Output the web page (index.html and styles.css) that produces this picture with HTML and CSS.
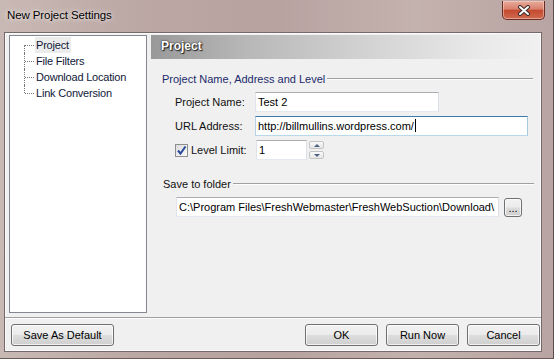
FILE: index.html
```html
<!DOCTYPE html>
<html lang="en">
  <head>
    <meta charset="UTF-8" />
    <title>New Project Settings</title>
    <link rel="stylesheet" href="styles.css">
  </head>
  <body>
    <div class="window">
      <div class="titlebar">
        <span class="titlebar-text">New Project Settings</span>
        <div class="titlebar-close">
          <svg width="14" height="11" viewBox="0 0 14 11">
            <path d="M3 2 L11 9 M11 2 L3 9" stroke="#3b2a28" stroke-width="4" stroke-linecap="round" />
            <path d="M3 2 L11 9 M11 2 L3 9" stroke="#ffffff" stroke-width="2" stroke-linecap="round" />
          </svg>
        </div>
      </div>

      <div class="client">
        <div class="main">
          <ul class="tree">
            <li class="tree-item"><span class="tree-label tree-selected">Project</span></li>
            <li class="tree-item"><span class="tree-label">File Filters</span></li>
            <li class="tree-item"><span class="tree-label">Download Location</span></li>
            <li class="tree-item"><span class="tree-label">Link Conversion</span></li>
          </ul>

          <div class="panel">
            <div class="panel-head">Project</div>

            <div class="group-title group-first">
              <span>Project Name, Address and Level</span>
              <span class="group-line"></span>
            </div>

            <div class="field-row row-first">
              <span class="field-label">Project Name:</span>
              <div class="textbox box-name">Test 2</div>
            </div>
            <div class="field-row">
              <span class="field-label">URL Address:</span>
              <div class="textbox textbox-focus box-url">http://billmullins.wordpress.com/<span class="caret"></span></div>
            </div>
            <div class="field-row">
              <span class="field-label field-check">
                <span class="checkbox">
                  <svg width="11" height="11" viewBox="0 0 11 11">
                    <path d="M2 5.5 L4.5 8.5 L9.5 1.5" stroke="#2b4a9a" stroke-width="2" fill="none" />
                  </svg>
                </span>
                Level Limit:
              </span>
              <div class="textbox box-level">1</div>
              <div class="spin">
                <div class="spin-btn"><span class="arrow-up"></span></div>
                <div class="spin-btn"><span class="arrow-down"></span></div>
              </div>
            </div>

            <div class="group-title group-second">
              <span>Save to folder</span>
              <span class="group-line"></span>
            </div>

            <div class="field-row folder-row">
              <div class="textbox box-folder">C:\Program Files\FreshWebmaster\FreshWebSuction\Download\</div>
              <div class="button button-browse">...</div>
            </div>
          </div>
        </div>

        <div class="separator"></div>

        <div class="buttons">
          <div class="button button-default">Save As Default</div>
          <div class="buttons-right">
            <div class="button button-action">OK</div>
            <div class="button button-action">Run Now</div>
            <div class="button button-action">Cancel</div>
          </div>
        </div>
      </div>
    </div>
  </body>
</html>
```

FILE: styles.css
```css
* {
  margin: 0;
  padding: 0;
  box-sizing: border-box;
}

body {
  width: 554px;
  height: 359px;
  overflow: hidden;
  font-family: "Liberation Sans", Arial, sans-serif;
  font-size: 11px;
  color: #111;
}

.window {
  height: 359px;
  display: flex;
  flex-direction: column;
  padding: 0 11px 6px 4px;
  border-right: 1px solid #5e4e4c;
  border-bottom: 1px solid #6a5a58;
  background: linear-gradient(90deg, #c9b9b4 0%, #bba7a4 25%, #b7a2a0 50%, #c4b2ae 75%, #b8a4a2 100%);
}

.titlebar {
  height: 32px;
  display: flex;
  justify-content: space-between;
  align-items: flex-start;
  padding-left: 3px;
}

.titlebar-text {
  margin-top: 9px;
  font-size: 11.5px;
  letter-spacing: -0.1px;
  color: #000;
  text-shadow: 0 0 6px rgba(255, 255, 255, 0.8), 0 0 3px rgba(255, 255, 255, 0.6);
}

.titlebar-close {
  width: 43px;
  height: 19px;
  margin-top: 1px;
  margin-right: -3px;
  display: flex;
  align-items: center;
  justify-content: center;
  border: 1px solid #6b2d22;
  border-top: none;
  border-radius: 0 0 5px 5px;
  background: linear-gradient(#e8ab9c, #d9806b 45%, #c54a30 52%, #cf6a50);
  box-shadow: inset 0 0 0 1px rgba(255, 220, 210, 0.5);
}

.client {
  flex: 1;
  display: flex;
  flex-direction: column;
  background: #f0f0f0;
  border: 1px solid #75696a;
  box-shadow: inset 0 0 0 1px #fafafa;
}

.main {
  height: 280px;
  display: flex;
  gap: 4px;
  padding: 2px 3px 0 4px;
}

/* tree on the left */
.tree {
  width: 138px;
  height: 278px;
  list-style: none;
  background: white;
  border: 1px solid #828790;
  padding: 1px 0 0 25px;
}

.tree-item {
  position: relative;
  height: 16px;
  line-height: 16px;
  color: #101838;
  letter-spacing: -0.2px;
}

.tree-item::before {
  content: "";
  position: absolute;
  left: -11px;
  top: 0;
  height: 16px;
  border-left: 1px dotted #777;
}

.tree-item:first-child::before {
  top: 8px;
  height: 8px;
}

.tree-item:last-child::before {
  height: 8px;
}

.tree-item::after {
  content: "";
  position: absolute;
  left: -10px;
  top: 8px;
  width: 9px;
  border-top: 1px dotted #777;
}

.tree-label {
  padding: 0 2px 0 1px;
  display: inline-block;
}

.tree-selected {
  background: #ececec;
}

/* right panel */
.panel {
  flex: 1;
}

.panel-head {
  height: 24px;
  line-height: 23px;
  padding-left: 10px;
  font-size: 12px;
  font-weight: bold;
  color: white;
  text-shadow: 1px 1px 1px #222, 0 0 2px #333, 0 0 1px #333;
  background: linear-gradient(90deg, #999999 0%, #b8b8b8 25%, #d2d2d2 55%, #e9e9e9 85%, #f0f0f0 100%);
}

.group-title {
  height: 14px;
  display: flex;
  align-items: center;
}

.group-first {
  margin-top: 13px;
  padding: 0 5px 0 11px;
  color: #1b2a6b;
}

.group-second {
  margin-top: 17px;
  padding: 0 4px 0 12px;
}

.group-line {
  flex: 1;
  margin-left: 2px;
  border-top: 1px solid #a0a0a0;
  border-bottom: 1px solid #fdfdfd;
}

.field-row {
  height: 20px;
  margin-top: 4px;
  display: flex;
  align-items: center;
  padding-left: 24px;
}

.row-first {
  margin-top: 6px;
}

.field-label {
  width: 80px;
}

.field-check {
  width: 81px;
  display: flex;
  align-items: center;
  gap: 3px;
}

.checkbox {
  width: 13px;
  height: 13px;
  display: flex;
  align-items: center;
  justify-content: center;
  border: 1px solid #8e8f8f;
  background: linear-gradient(135deg, #dcdcdc, #fbfbfb);
}

.textbox {
  height: 20px;
  line-height: 18px;
  padding-left: 2px;
  background: white;
  border: 1px solid;
  border-color: #abadb3 #dbdfe6 #e3e9ef #e2e3ea;
  color: #000;
  white-space: nowrap;
  overflow: hidden;
}

.textbox-focus {
  border-color: #3d7bad #a4c9e3 #b7d9ed #b5cfe7;
}

.caret {
  display: inline-block;
  width: 1px;
  height: 13px;
  margin-left: 1px;
  vertical-align: -2px;
  background: #000;
}

.box-name {
  width: 184px;
}

.box-url {
  width: 273px;
}

.box-level {
  width: 51px;
}

.spin {
  margin-left: 2px;
  display: flex;
  flex-direction: column;
  gap: 2px;
}

.spin-btn {
  width: 15px;
  height: 8px;
  display: flex;
  align-items: center;
  justify-content: center;
  border: 1px solid #c4c4c4;
  border-radius: 2px;
  background: linear-gradient(#fafafa, #e6e6e6);
}

.arrow-up {
  border-left: 3px solid transparent;
  border-right: 3px solid transparent;
  border-bottom: 3px solid #4d6185;
}

.arrow-down {
  border-left: 3px solid transparent;
  border-right: 3px solid transparent;
  border-top: 3px solid #4d6185;
}

.folder-row {
  margin-top: 6px;
  padding-left: 25px;
}

.box-folder {
  width: 323px;
}

/* buttons */
.button {
  height: 22px;
  display: flex;
  align-items: center;
  justify-content: center;
  border: 1px solid #707070;
  border-radius: 3px;
  color: #000;
  background: linear-gradient(#f2f2f2 0%, #ebebeb 49%, #dddddd 51%, #cfcfcf 100%);
  box-shadow: inset 0 0 0 1px rgba(255, 255, 255, 0.7);
}

.button-browse {
  width: 18px;
  height: 19px;
  margin-left: 5px;
  align-items: flex-end;
  padding-bottom: 4px;
  line-height: 8px;
}

.separator {
  margin-top: 4px;
  border-top: 1px solid #a0a0a0;
  border-bottom: 1px solid #fdfdfd;
}

.buttons {
  display: flex;
  justify-content: space-between;
  padding: 5px 1px 0 6px;
}

.button-default {
  width: 103px;
}

.buttons-right {
  display: flex;
  gap: 8px;
}

.button-action {
  width: 73px;
}
```
